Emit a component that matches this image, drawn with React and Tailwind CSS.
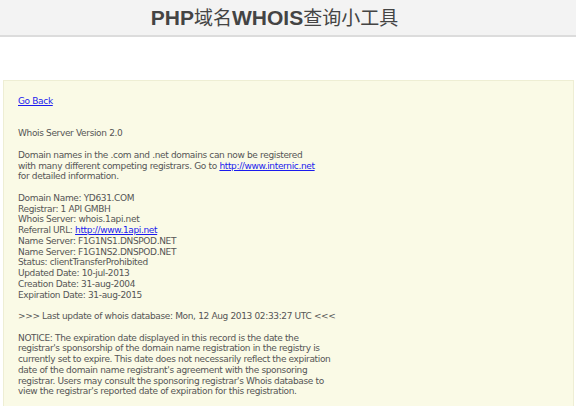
const lines = [
  'Whois Server Version 2.0',
  '',
  'Domain names in the .com and .net domains can now be registered',
  ['with many different competing registrars. Go to ', { href: 'http://www.internic.net' }],
  'for detailed information.',
  '',
  'Domain Name: YD631.COM',
  'Registrar: 1 API GMBH',
  'Whois Server: whois.1api.net',
  ['Referral URL: ', { href: 'http://www.1api.net' }],
  'Name Server: F1G1NS1.DNSPOD.NET',
  'Name Server: F1G1NS2.DNSPOD.NET',
  'Status: clientTransferProhibited',
  'Updated Date: 10-jul-2013',
  'Creation Date: 31-aug-2004',
  'Expiration Date: 31-aug-2015',
  '',
  '>>> Last update of whois database: Mon, 12 Aug 2013 02:33:27 UTC <<<',
  '',
  'NOTICE: The expiration date displayed in this record is the date the',
  "registrar's sponsorship of the domain name registration in the registry is",
  'currently set to expire. This date does not necessarily reflect the expiration',
  "date of the domain name registrant's agreement with the sponsoring",
  "registrar. Users may consult the sponsoring registrar's Whois database to",
  "view the registrar's reported date of expiration for this registration.",
];

const Line = ({ line }) => {
  if (line === '') return <div className="h-[10.75px]" />;
  if (typeof line === 'string') return <div className="whitespace-pre">{line}</div>;
  return (
    <div className="whitespace-pre">
      {line[0]}
      <a href="#" className="text-[#1a1aee] underline">{line[1].href}</a>
    </div>
  );
};

export default function App() {
  return (
    <div className="h-[406px] bg-white overflow-hidden">
      {/* Header */}
      <div className="h-[37px] bg-[#f3f3f3] border-b-2 border-[#dcdcdc] flex items-center justify-center">
        <h1
          className="text-[21px] font-bold text-[#444] pr-[27px] leading-none"
          style={{ fontFamily: '"Liberation Sans", "Noto Sans CJK SC", sans-serif' }}
        >
          PHP<span className="font-normal text-[19px]">域名</span>WHOIS<span className="font-normal text-[19px]">查询小工具</span>
        </h1>
      </div>

      {/* Result box */}
      <div className="mt-[43px] ml-[3px] mr-[2px] h-[400px] bg-[#fafae6] border border-[#eeeed4] pl-[14px] pt-[15px]">
        <div
          className="text-[9px] leading-[10.75px] text-[#555] tracking-[-0.35px]"
          style={{ fontFamily: '"DejaVu Sans", sans-serif' }}
        >
          <a href="#" className="text-[#1a1aee] underline">Go Back</a>
          <div className="h-[21.5px]" />
          {lines.map((line, i) => (
            <Line key={i} line={line} />
          ))}
        </div>
      </div>
    </div>
  );
}
